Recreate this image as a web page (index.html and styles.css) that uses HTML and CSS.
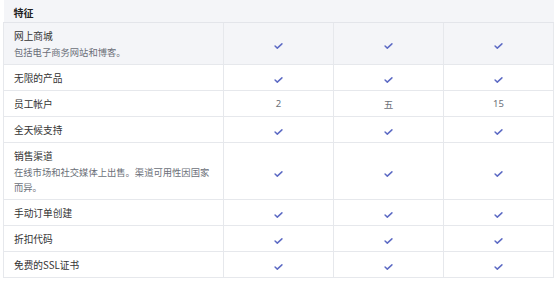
FILE: index.html
```html
<!DOCTYPE html>
<html lang="zh">
<head>
<meta charset="utf-8">
<link rel="stylesheet" href="styles.css">
</head>
<body>
<table class="features">
  <colgroup>
    <col class="c-name">
    <col class="c-val">
    <col class="c-val">
    <col class="c-val">
  </colgroup>
  <thead>
    <tr><th colspan="4" class="head">特征</th></tr>
  </thead>
  <tbody>
    <tr class="shaded">
      <td class="name"><div class="title">网上商城</div><div class="desc">包括电子商务网站和博客。</div></td>
      <td class="val"><svg class="check" viewBox="0 0 10 7"><path d="M1 3.6 L3.6 6 L9 1"/></svg></td>
      <td class="val"><svg class="check" viewBox="0 0 10 7"><path d="M1 3.6 L3.6 6 L9 1"/></svg></td>
      <td class="val"><svg class="check" viewBox="0 0 10 7"><path d="M1 3.6 L3.6 6 L9 1"/></svg></td>
    </tr>
    <tr>
      <td class="name"><div class="title">无限的产品</div></td>
      <td class="val"><svg class="check" viewBox="0 0 10 7"><path d="M1 3.6 L3.6 6 L9 1"/></svg></td>
      <td class="val"><svg class="check" viewBox="0 0 10 7"><path d="M1 3.6 L3.6 6 L9 1"/></svg></td>
      <td class="val"><svg class="check" viewBox="0 0 10 7"><path d="M1 3.6 L3.6 6 L9 1"/></svg></td>
    </tr>
    <tr>
      <td class="name"><div class="title">员工帐户</div></td>
      <td class="val num">2</td>
      <td class="val num">五</td>
      <td class="val num">15</td>
    </tr>
    <tr>
      <td class="name"><div class="title">全天候支持</div></td>
      <td class="val"><svg class="check" viewBox="0 0 10 7"><path d="M1 3.6 L3.6 6 L9 1"/></svg></td>
      <td class="val"><svg class="check" viewBox="0 0 10 7"><path d="M1 3.6 L3.6 6 L9 1"/></svg></td>
      <td class="val"><svg class="check" viewBox="0 0 10 7"><path d="M1 3.6 L3.6 6 L9 1"/></svg></td>
    </tr>
    <tr>
      <td class="name"><div class="title">销售渠道</div><div class="desc">在线市场和社交媒体上出售。渠道可用性因国家而异。</div></td>
      <td class="val"><svg class="check" viewBox="0 0 10 7"><path d="M1 3.6 L3.6 6 L9 1"/></svg></td>
      <td class="val"><svg class="check" viewBox="0 0 10 7"><path d="M1 3.6 L3.6 6 L9 1"/></svg></td>
      <td class="val"><svg class="check" viewBox="0 0 10 7"><path d="M1 3.6 L3.6 6 L9 1"/></svg></td>
    </tr>
    <tr>
      <td class="name"><div class="title">手动订单创建</div></td>
      <td class="val"><svg class="check" viewBox="0 0 10 7"><path d="M1 3.6 L3.6 6 L9 1"/></svg></td>
      <td class="val"><svg class="check" viewBox="0 0 10 7"><path d="M1 3.6 L3.6 6 L9 1"/></svg></td>
      <td class="val"><svg class="check" viewBox="0 0 10 7"><path d="M1 3.6 L3.6 6 L9 1"/></svg></td>
    </tr>
    <tr>
      <td class="name"><div class="title">折扣代码</div></td>
      <td class="val"><svg class="check" viewBox="0 0 10 7"><path d="M1 3.6 L3.6 6 L9 1"/></svg></td>
      <td class="val"><svg class="check" viewBox="0 0 10 7"><path d="M1 3.6 L3.6 6 L9 1"/></svg></td>
      <td class="val"><svg class="check" viewBox="0 0 10 7"><path d="M1 3.6 L3.6 6 L9 1"/></svg></td>
    </tr>
    <tr>
      <td class="name"><div class="title">免费的SSL证书</div></td>
      <td class="val"><svg class="check" viewBox="0 0 10 7"><path d="M1 3.6 L3.6 6 L9 1"/></svg></td>
      <td class="val"><svg class="check" viewBox="0 0 10 7"><path d="M1 3.6 L3.6 6 L9 1"/></svg></td>
      <td class="val"><svg class="check" viewBox="0 0 10 7"><path d="M1 3.6 L3.6 6 L9 1"/></svg></td>
    </tr>
  </tbody>
</table>
</body>
</html>
```

FILE: styles.css
```css
html, body {
  margin: 0;
  padding: 0;
  background: #ffffff;
}

body {
  padding: 0 1px 0 3px;
  font-family: "Noto Sans CJK SC", "Noto Sans", sans-serif;
  color: #333;
}

.features {
  width: 550px;
  border-collapse: collapse;
  table-layout: fixed;
}

.c-name {
  width: 220px;
}

.c-val {
  width: 110px;
}

.head {
  background: #f4f5f8;
  text-align: left;
  font-size: 10px;
  font-weight: bold;
  color: #222;
  line-height: 15px;
  padding: 5px 10px 2px;
  border-bottom: 1px solid #e3e5ea;
}

td {
  border: 1px solid #e6e8ec;
  border-top: 0;
  padding: 0;
}

.name {
  padding: 6px 10px 4px 10px;
  vertical-align: top;
}

.val {
  text-align: center;
  vertical-align: middle;
}

.shaded td {
  background: #f4f5f8;
}

.title {
  font-size: 9.7px;
  line-height: 15px;
  color: #333;
}

.desc {
  font-size: 9.3px;
  line-height: 15px;
  color: #6b6f78;
  margin-top: 1px;
}

.num {
  font-size: 9.5px;
  color: #6b6f78;
  font-family: "Noto Sans", "Noto Sans CJK SC", sans-serif;
}

.check {
  display: inline-block;
  width: 9px;
  height: 6px;
  vertical-align: middle;
}

.check path {
  fill: none;
  stroke: #5c6ac4;
  stroke-width: 1.7;
  stroke-linecap: round;
  stroke-linejoin: round;
}
```
